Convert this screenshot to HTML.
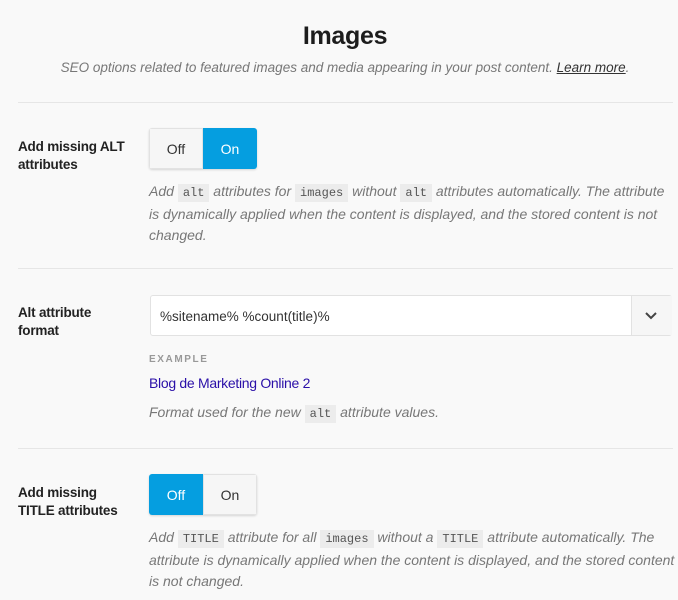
<!DOCTYPE html>
<html><head><meta charset="utf-8"><style>
body{margin:0;background:#f9f9f9;font-family:"Liberation Sans",sans-serif;color:#1d1d1d;width:678px;height:600px;overflow:hidden;position:relative}
.a{position:absolute}
h1{position:absolute;left:0;width:690px;top:22px;margin:0;text-align:center;font-size:25px;font-weight:bold;color:#1d1d1d;letter-spacing:-0.3px}
.sub{left:0;width:690px;top:60px;text-align:center;font-size:13.5px;font-style:italic;color:#777}
.sub u{color:#333}
.hr{left:18px;width:655px;height:1px;background:#e6e6e6}
.lbl{left:18px;font-size:13.5px;font-weight:bold;line-height:18px;color:#222;letter-spacing:-0.2px}
.tg{height:41px;display:flex;border-radius:3px;box-shadow:0 1px 2px rgba(0,0,0,.15);overflow:hidden}
.tg div{width:54px;display:flex;align-items:center;justify-content:center;font-size:14px}
.off{background:#f6f6f6;color:#333;border:1px solid #e2e2e2;box-sizing:border-box}
.on{background:#059ee0;color:#fff}
.d{left:149px;width:527px;font-size:14px;font-style:italic;color:#777;line-height:21px;letter-spacing:0}
code{font-family:"Liberation Mono",monospace;font-style:normal;font-size:12px;background:#ececec;color:#555;padding:2px 5px}
</style></head><body>
<h1>Images</h1>
<div class="a sub">SEO options related to featured images and media appearing in your post content. <u>Learn more</u>.</div>
<div class="a hr" style="top:102px"></div>
<div class="a lbl" style="top:138px">Add missing ALT<br>attributes</div>
<div class="a tg" style="left:149px;top:128px"><div class="off">Off</div><div class="on">On</div></div>
<div class="a d" style="top:181px">Add <code>alt</code> attributes for <code>images</code> without <code>alt</code> attributes automatically. The attribute is dynamically applied when the content is displayed, and the stored content is not changed.</div>
<div class="a hr" style="top:268px"></div>
<div class="a lbl" style="top:304px">Alt attribute<br>format</div>
<div class="a" style="left:150px;top:295px;width:522px;height:41px;background:#fff;border:1px solid #e2e2e2;box-sizing:border-box;border-radius:3px"></div>
<div class="a" style="left:631px;top:296px;width:40px;height:39px;background:#f6f6f6;border-left:1px solid #e2e2e2"></div>
<svg class="a" style="left:644px;top:311px" width="14" height="10" viewBox="0 0 14 10"><path d="M2 2l5 5 5-5" fill="none" stroke="#444" stroke-width="2"/></svg>
<div class="a" style="left:160px;top:309px;font-size:13.5px;color:#333">%sitename% %count(title)%</div>
<div class="a" style="left:149px;top:354px;font-size:10px;font-weight:bold;letter-spacing:1.6px;color:#999">EXAMPLE</div>
<div class="a" style="left:149px;top:375px;font-size:14px;color:#2a0fa8;letter-spacing:-0.3px">Blog de Marketing Online 2</div>
<div class="a d" style="top:402px">Format used for the new <code>alt</code> attribute values.</div>
<div class="a hr" style="top:448px"></div>
<div class="a lbl" style="top:484px">Add missing<br>TITLE attributes</div>
<div class="a tg" style="left:149px;top:474px"><div class="on">Off</div><div class="off">On</div></div>
<div class="a d" style="top:527px">Add <code>TITLE</code> attribute for all <code>images</code> without a <code>TITLE</code> attribute automatically. The attribute is dynamically applied when the content is displayed, and the stored content is not changed.</div>
</body></html>
